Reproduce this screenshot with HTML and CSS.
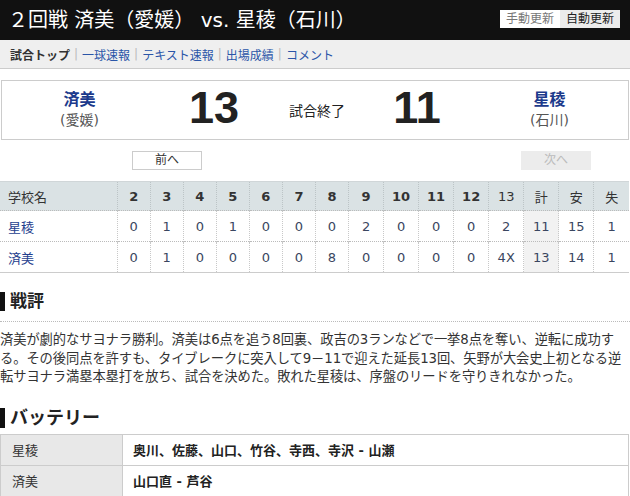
FILE: index.html
```html
<!DOCTYPE html>
<html lang="ja">
<head>
<meta charset="utf-8">
<title>２回戦 済美（愛媛） vs. 星稜（石川）</title>
<link rel="stylesheet" href="styles.css">
</head>
<body>
<header class="top">
  <h1 class="title">２回戦 済美（愛媛） vs. 星稜（石川）</h1>
  <div class="upd">
    <span class="ubtn manual">手動更新</span>
    <span class="ubtn auto">自動更新</span>
  </div>
</header>
<nav class="tabs">
  <span class="tab current">試合トップ</span><span class="sep">|</span>
  <a class="tab" href="#">一球速報</a><span class="sep">|</span>
  <a class="tab" href="#">テキスト速報</a><span class="sep">|</span>
  <a class="tab" href="#">出場成績</a><span class="sep">|</span>
  <a class="tab" href="#">コメント</a>
</nav>

<section class="scorebox">
  <div class="team">
    <div class="tname">済美</div>
    <div class="tpref">(愛媛)</div>
  </div>
  <div class="score">13</div>
  <div class="status">試合終了</div>
  <div class="score">11</div>
  <div class="team">
    <div class="tname">星稜</div>
    <div class="tpref">(石川)</div>
  </div>
</section>

<div class="pager">
  <a class="pbtn prev" href="#">前へ</a>
  <span class="pbtn next">次へ</span>
</div>

<table class="board">
  <colgroup>
    <col class="c-name">
    <col class="c-s"><col class="c-s"><col class="c-s"><col class="c-s"><col class="c-s"><col class="c-s"><col class="c-s">
    <col class="c-w"><col class="c-w"><col class="c-w"><col class="c-w"><col class="c-w">
    <col class="c-w"><col class="c-w"><col class="c-w">
  </colgroup>
  <thead>
    <tr>
      <th class="name">学校名</th>
      <th class="b">2</th><th class="b">3</th><th class="b">4</th><th class="b">5</th><th class="b">6</th><th class="b">7</th><th class="b">8</th><th class="b">9</th><th class="b">10</th><th class="b">11</th><th class="b">12</th><th>13</th>
      <th>計</th><th>安</th><th>失</th>
    </tr>
  </thead>
  <tbody>
    <tr>
      <td class="name"><a href="#">星稜</a></td>
      <td>0</td><td>1</td><td>0</td><td>1</td><td>0</td><td>0</td><td>0</td><td>2</td><td>0</td><td>0</td><td>0</td><td>2</td>
      <td class="total">11</td><td>15</td><td>1</td>
    </tr>
    <tr>
      <td class="name"><a href="#">済美</a></td>
      <td>0</td><td>1</td><td>0</td><td>0</td><td>0</td><td>0</td><td>8</td><td>0</td><td>0</td><td>0</td><td>0</td><td>4X</td>
      <td class="total">13</td><td>14</td><td>1</td>
    </tr>
  </tbody>
</table>

<section class="review">
  <h2 class="sec-h dotted">戦評</h2>
  <p class="rtext">済美が劇的なサヨナラ勝利。済美は6点を追う8回裏、政吉の3ランなどで一挙8点を奪い、逆転に成功す<br>る。その後同点を許すも、タイブレークに突入して9－11で迎えた延長13回、矢野が大会史上初となる逆<br>転サヨナラ満塁本塁打を放ち、試合を決めた。敗れた星稜は、序盤のリードを守りきれなかった。</p>
</section>

<section class="battery">
  <h2 class="sec-h">バッテリー</h2>
  <table class="bat">
    <tr><th>星稜</th><td>奥川、佐藤、山口、竹谷、寺西、寺沢 - 山瀬</td></tr>
    <tr><th>済美</th><td>山口直 - 芦谷</td></tr>
  </table>
</section>
</body>
</html>
```

FILE: styles.css
```css
* { box-sizing: border-box; }
html, body { margin: 0; padding: 0; }
body {
  font-family: "DejaVu Sans", "Noto Sans CJK JP", sans-serif;
  font-size: 13px;
  color: #333;
  background: #fff;
  width: 630px;
  overflow: hidden;
}
a { text-decoration: none; }

.top {
  background: #111;
  height: 40px;
  display: flex;
  align-items: center;
  justify-content: space-between;
  padding: 0 10px 0 8px;
}
.title {
  margin: 0;
  color: #fff;
  font-size: 20px;
  font-weight: normal;
  line-height: 24px;
  white-space: nowrap;
}
.upd { display: flex; margin-top: -2px; }
.ubtn {
  width: 60px;
  height: 18px;
  line-height: 18px;
  font-size: 12px;
  text-align: center;
}
.manual { background: #fff; color: #777; }
.auto { background: #ececec; color: #222; }

.tabs {
  height: 29px;
  background: #efefef;
  border-bottom: 1px solid #ccc;
  display: flex;
  align-items: center;
  padding-left: 10px;
  font-size: 12px;
}
.tab { color: #2a55a8; }
.tab.current { color: #333; font-weight: bold; }
.sep { color: #bbb; margin: 0 4px; font-size: 12px; }

.scorebox {
  margin: 11px 1px 0 1px;
  height: 60px;
  border: 1px solid #ccc;
  display: grid;
  grid-template-columns: 155px 114px 92px 108px 1fr;
  align-items: center;
}
.team { text-align: center; }
.tname { color: #1c3a8c; font-weight: bold; font-size: 16px; line-height: 20px; }
.tpref { color: #555; font-size: 14px; line-height: 20px; }
.score {
  text-align: center;
  font-family: "Liberation Sans", Arial, sans-serif;
  font-weight: bold;
  font-size: 45px;
  color: #222;
  line-height: 50px;
  padding-bottom: 5px;
}
.status { text-align: center; font-size: 14px; color: #222; }

.pager {
  display: flex;
  justify-content: space-between;
  margin: 11px 39px 0 132px;
}
.pbtn {
  width: 70px;
  height: 19px;
  line-height: 17px;
  font-size: 12px;
  text-align: center;
}
.prev { border: 1px solid #ccc; background: #fff; color: #333; }
.next { border: 1px solid #ececec; background: #ececec; color: #bbb; }

.board {
  margin-top: 11px;
  width: 629px;
  border-collapse: collapse;
  table-layout: fixed;
  border-top: 1px solid #d0d6d8;
  border-bottom: 1px solid #ccc;
}
.c-name { width: 117px; }
.c-s { width: 33px; }
.c-w { width: 35px; }
.board th {
  background: #dae2e4;
  height: 29px;
  font-weight: normal;
  color: #333;
  text-align: center;
  font-size: 13px;
  border-left: 1px dotted #bcc4c6;
  padding: 0;
}
.board th.b { font-weight: bold; }
.board th.name, .board td.name { text-align: left; padding-left: 8px; border-left: none; }
.board td {
  height: 31px;
  text-align: center;
  color: #3a4660;
  font-size: 13px;
  border-left: 1px dotted #c8c8c8;
  border-top: 1px dotted #bbb;
  padding: 0;
}
.board td.name a { color: #24408e; }
.board td.total { background: #f2f2f2; }

.review { margin-top: 19px; }
.sec-h {
  margin: 0;
  font-size: 17px;
  font-weight: bold;
  color: #222;
  line-height: 19px;
  border-left: 5px solid #111;
  padding-left: 5px;
}
.review .sec-h { margin-left: 0; }
.dotted-wrap { }
.review .sec-h.dotted {
  position: relative;
}
.review::before { content: none; }
.review .rule { }
.review .sec-h + .rtext { }
.rtext {
  margin: 0;
  padding-top: 9px;
  border-top: 1px dotted #bbb;
  font-size: 13.3px;
  line-height: 18.5px;
  color: #333;
  white-space: nowrap;
  letter-spacing: -0.1px;
}
.review .sec-h { margin-bottom: 10px; }

.battery { margin-top: 21px; }
.battery .sec-h { font-size: 18px; line-height: 20px; }
.bat {
  margin-top: 6px;
  width: 629px;
  border-collapse: collapse;
}
.bat th, .bat td {
  border: 1px solid #ccc;
  height: 31px;
  font-size: 13px;
  text-align: left;
  padding: 0;
}
.bat th {
  width: 122px;
  background: #e8e8e8;
  font-weight: normal;
  color: #333;
  padding-left: 11px;
}
.bat td {
  font-weight: bold;
  color: #222;
  padding-left: 10px;
}
```
